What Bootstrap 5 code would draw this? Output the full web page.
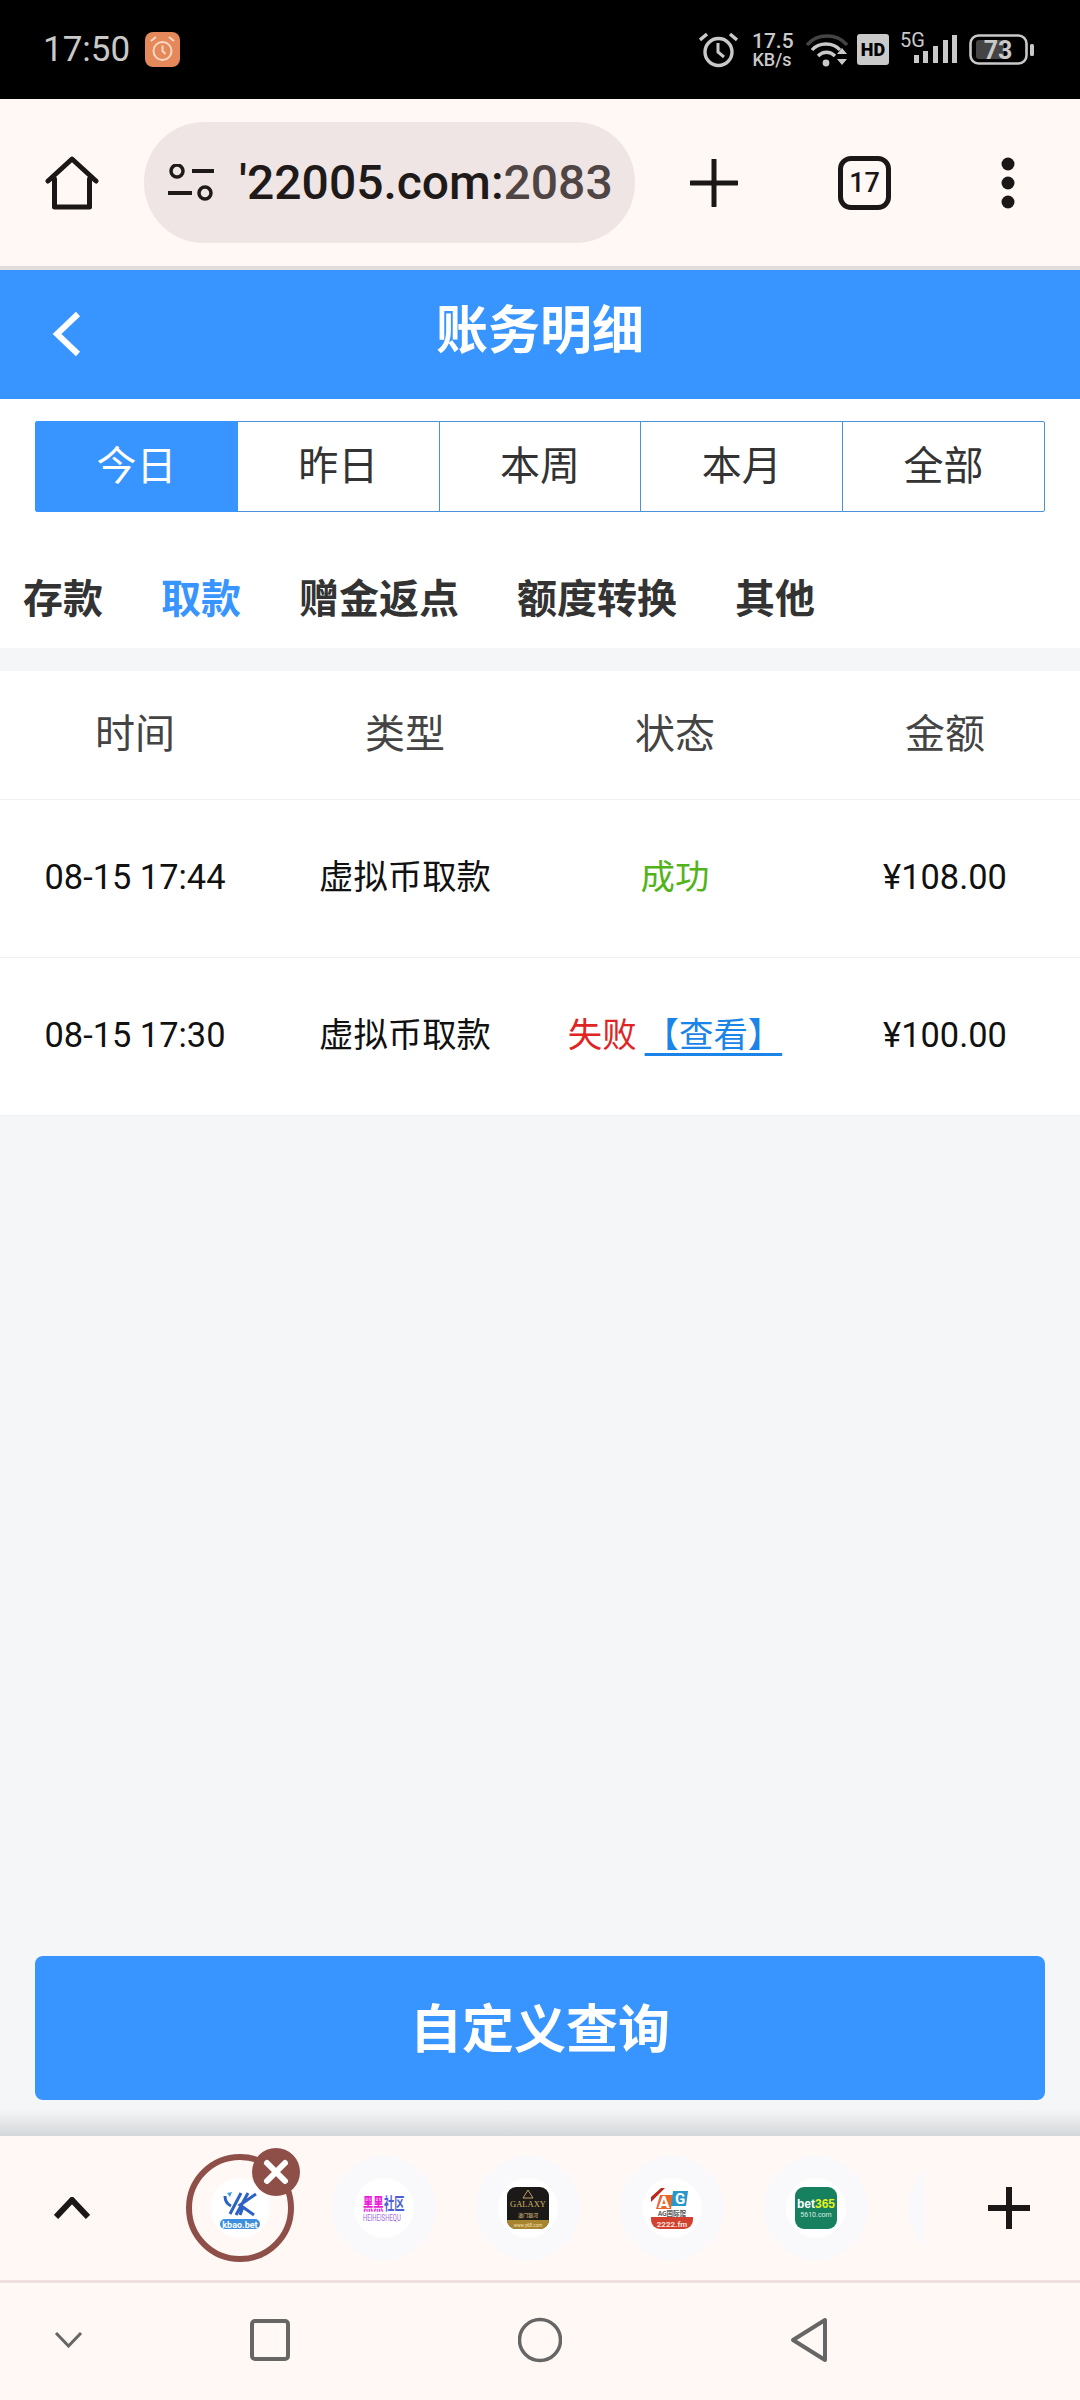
<!DOCTYPE html>
<html lang="zh-CN">
<head>
  <meta charset="UTF-8">
  <meta name="viewport" content="width=device-width, initial-scale=1.0">
  <title>账务明细</title>
  <link href="https://cdn.jsdelivr.net/npm/bootstrap@5.3.0/dist/css/bootstrap.min.css" rel="stylesheet">
  <style>
    html, body { height: 100%; }
    body { font-family: Roboto, "Noto Sans CJK SC", sans-serif; background: #f5f6f8; width: 1080px; }
    svg { display: block; flex: none; }

    /* phone status bar */
    .status-strip { height: 99px; background: #000; color: #c9c9c9; padding: 0 45px 0 43px; font-family: Roboto, sans-serif; }
    .status-time { font-size: 35px; line-height: 1; width: 102px; }
    .speed-text { font-size: 18px; line-height: 17px; font-weight: 500; width: 40px; margin: 0 14px; text-align: center; }
    .speed-text b { display: block; font-size: 21px; font-weight: 500; line-height: 20px; }
    .hd-icon { margin-left: 9px; }
    .net-icon, .batt-icon { margin-left: 11px; }

    /* browser toolbar */
    .browser-bar { height: 167px; background: #fff8f5; padding: 0 45px; }
    .url-pill { width: 491px; height: 121px; margin-left: 45px; margin-right: 55px; background: #efe5e4; border-radius: 60px; padding-left: 24px; }
    .url-text { margin-left: 25px; white-space: nowrap; font-family: Roboto, sans-serif; font-weight: 500; font-size: 48px; line-height: 60px; color: #1f1a1a; }
    .url-text i { font-style: normal; color: #4f4545; }
    .tab-count { width: 53px; height: 54px; margin: 0 109px 0 100px; border: 5px solid #1c1717; border-radius: 13px; font: 500 27px/44px Roboto, sans-serif; color: #1c1717; text-align: center; }
    .bar-rule { height: 4px; background: #e2dcdd; }

    /* page header */
    .page-head { height: 129px; background: #3894ff; padding-left: 52px; }
    .back-icon { margin-top: -2px; position: relative; z-index: 1; }
    .page-title { flex: 1; margin-left: -82px; text-align: center; color: #fff; font-size: 52px; font-weight: 700; line-height: 1; padding-bottom: 6px; }

    /* date range */
    .range-wrap { padding: 22px 35px 0; background: #fff; }
    .range-wrap .btn { height: 91px; padding: 0; font-size: 40px; line-height: 84px; color: #333; background: #fff; border: 1px solid #4a93d8; border-radius: 0; }
    .range-wrap .btn:first-child { border-radius: 2px 0 0 2px; }
    .range-wrap .btn:last-child { border-radius: 0 2px 2px 0; }
    .range-wrap .btn.active { color: #fff; background: #3894ff; border-color: #3894ff; }

    .kind-tabs { background: #fff; height: 136px; padding: 52px 0 0 23px; gap: 58px; font-size: 40px; font-weight: 700; line-height: 72px; color: #333; }
    .kind-tabs .on { color: #3894ff; }

    /* records */
    .record-list { margin-top: 23px; background: #fff; text-align: center; }
    .record-head { height: 129px; font-size: 40px; line-height: 128px; color: #444; border-bottom: 1px solid #f1f1f3; padding-bottom: 2px; }
    .record-row { height: 158px; font-size: 34.4px; line-height: 155px; color: #111; border-bottom: 1px solid #f1f1f3; }
    .state-ok { color: #52b31a; }
    .state-bad { color: #e02424; }
    .state-link { color: #1a84e8; text-decoration: underline; text-decoration-thickness: 3px; text-underline-offset: 6px; margin-left: 8px; }

    .custom-btn { height: 144px; margin: 0 35px 9px; padding-top: 12px; background: #3894ff; border: 0; border-radius: 8px; color: #fff; font-size: 52px; font-weight: 700; }
    .custom-btn:hover { background: #3894ff; color: #fff; }
    .bar-shade { height: 27px; background: linear-gradient(#f5f6f8, #d4d7d9); }

    /* bookmark strip */
    .site-strip { height: 144px; background: #fff8f5; padding-left: 54px; }
    .site-scroll { width: 757px; height: 144px; margin-left: 78px; margin-right: 62px; overflow: hidden; }
    .site-slot { flex: 0 0 144px; height: 144px; position: relative; }
    .site-halo { width: 104px; height: 104px; border-radius: 50%; background: #f9f8fb; }
    .site-halo.current { width: 108px; height: 108px; background: #fff8f5; border: 6px solid #8f4f49; }
    .site-icon { width: 60px; height: 60px; border-radius: 50%; background: #fff; }
    .site-close { position: absolute; left: 84px; top: 12px; width: 48px; height: 48px; border-radius: 50%; background: #8f4f49; }
    .strip-rule { height: 3px; background: #f0dfdf; }

    /* phone nav */
    .phone-nav { height: 117px; background: #fff8f5; padding: 0 0 3px 54px; }
    .nav-square { margin-left: 167px; }
    .nav-round, .nav-back { margin-left: 228px; }
  </style>
</head>
<body class="d-flex flex-column">

  <div class="status-strip d-flex align-items-center">
    <span class="status-time">17:50</span>
    <svg width="35" height="35" viewBox="0 0 35 35">
      <rect width="35" height="35" rx="8" fill="#e5895a"/>
      <circle cx="17.5" cy="19" r="9" fill="none" stroke="#f8d9c6" stroke-width="2"/>
      <path d="M17.5 13.5V19l3 3M6 9l5-4M29 9l-5-4" fill="none" stroke="#f8d9c6" stroke-width="2"/>
    </svg>
    <span class="flex-grow-1"></span>
    <svg width="39" height="36" viewBox="0 0 39 36">
      <circle cx="19.5" cy="20" r="13.5" fill="none" stroke="#c9c9c9" stroke-width="3.4"/>
      <path d="M19 11v9l6 5" fill="none" stroke="#c9c9c9" stroke-width="3"/>
      <path d="M1 8l7-6M38 8l-7-6" fill="none" stroke="#c9c9c9" stroke-width="3.4"/>
    </svg>
    <span class="speed-text"><b>17.5</b>KB/s</span>
    <svg width="42" height="34" viewBox="0 0 42 34">
      <path d="M1 12C11 0 31 0 41 12" fill="none" stroke="#444" stroke-width="3.4"/>
      <path d="M6 17C13 9 27 9 34 17M12 23c5-5 12-5 17 0" fill="none" stroke="#c9c9c9" stroke-width="3.4"/>
      <circle cx="20" cy="30" r="3.4" fill="#c9c9c9"/>
      <path d="M31 21l5-6 5 6zM31 26h10l-5 6z" fill="#c9c9c9"/>
    </svg>
    <svg class="hd-icon" width="32" height="31" viewBox="0 0 32 31">
      <rect width="32" height="31" rx="3" fill="#c9c9c9"/>
      <text x="16" y="22" text-anchor="middle" font-family="Roboto, sans-serif" font-size="18" font-weight="900" fill="#000">HD</text>
    </svg>
    <svg class="net-icon" width="58" height="56" viewBox="0 0 58 56">
      <text x="0" y="25" font-family="Roboto, sans-serif" font-size="20" fill="#c9c9c9">5G</text>
      <path d="M14 33h5v8h-5zM23 29h5v12h-5zM33 24h5v17h-5zM43 18h5v23h-5zM52 13h5v28h-5z" fill="#c9c9c9"/>
    </svg>
    <svg class="batt-icon" width="66" height="31" viewBox="0 0 66 31">
      <rect x="1.5" y="1.5" width="56" height="28" rx="8" fill="none" stroke="#c9c9c9" stroke-width="2.6"/>
      <rect x="7" y="6" width="28" height="19" rx="3" fill="#444"/>
      <rect x="61" y="10" width="4" height="12" rx="1.5" fill="#c9c9c9"/>
      <text x="29" y="25" text-anchor="middle" font-family="Roboto, sans-serif" font-size="25" font-weight="700" fill="#c9c9c9">73</text>
    </svg>
  </div>

  <div class="browser-bar d-flex align-items-center">
    <svg width="54" height="54" viewBox="0 0 54 54">
      <path d="M3 25L27 3l24 22M9.500 23v28h35V23" fill="none" stroke="#1c1717" stroke-width="5" stroke-linejoin="round" stroke-linecap="round"/>
    </svg>
    <div class="url-pill d-flex align-items-center">
      <svg width="46" height="37" viewBox="0 0 46 37">
        <circle cx="9" cy="7" r="6" fill="none" stroke="#1f1a1a" stroke-width="3.5"/>
        <circle cx="37" cy="29" r="6" fill="none" stroke="#1f1a1a" stroke-width="3.5"/>
        <path d="M24 7h22M0 29h24" stroke="#1f1a1a" stroke-width="4"/>
      </svg>
      <div class="url-text">'22005.com:<i>2083</i></div>
    </div>
    <svg width="48" height="48" viewBox="0 0 48 48">
      <path d="M24 1v46M1 24h46" stroke="#1c1717" stroke-width="5" stroke-linecap="round"/>
    </svg>
    <div class="tab-count">17</div>
    <svg width="16" height="54" viewBox="0 0 16 54">
      <circle cx="8" cy="8" r="6.500" fill="#1c1717"/><circle cx="8" cy="27" r="6.500" fill="#1c1717"/><circle cx="8" cy="46" r="6.500" fill="#1c1717"/>
    </svg>
  </div>
  <div class="bar-rule"></div>

  <div class="page-head d-flex align-items-center">
    <svg class="back-icon" width="30" height="46" viewBox="0 0 30 46">
      <path d="M26 3L5 23l21 20" fill="none" stroke="#fff" stroke-width="6"/>
    </svg>
    <div class="page-title">账务明细</div>
  </div>

  <div class="range-wrap">
    <div class="btn-group w-100" role="group">
      <button type="button" class="btn active">今日</button>
      <button type="button" class="btn">昨日</button>
      <button type="button" class="btn">本周</button>
      <button type="button" class="btn">本月</button>
      <button type="button" class="btn">全部</button>
    </div>
  </div>

  <div class="kind-tabs d-flex">
    <span>存款</span>
    <span class="on">取款</span>
    <span>赠金返点</span>
    <span>额度转换</span>
    <span>其他</span>
  </div>

  <div class="record-list">
    <div class="row g-0 record-head">
      <div class="col-3">时间</div>
      <div class="col-3">类型</div>
      <div class="col-3">状态</div>
      <div class="col-3">金额</div>
    </div>
    <div class="row g-0 record-row">
      <div class="col-3">08-15 17:44</div>
      <div class="col-3">虚拟币取款</div>
      <div class="col-3 state-ok">成功</div>
      <div class="col-3">¥108.00</div>
    </div>
    <div class="row g-0 record-row">
      <div class="col-3">08-15 17:30</div>
      <div class="col-3">虚拟币取款</div>
      <div class="col-3"><span class="state-bad">失败</span><a class="state-link" href="#">【查看】</a></div>
      <div class="col-3">¥100.00</div>
    </div>
  </div>

  <div class="flex-grow-1"></div>

  <button type="button" class="btn custom-btn">自定义查询</button>
  <div class="bar-shade"></div>

  <div class="site-strip d-flex align-items-center">
    <svg width="36" height="22" viewBox="0 0 36 22">
      <path d="M2 20L18 3l16 17" fill="none" stroke="#1c1717" stroke-width="6"/>
    </svg>
    <div class="site-scroll d-flex">
      <div class="site-slot d-flex align-items-center justify-content-center">
        <div class="site-halo current d-flex align-items-center justify-content-center">
          <div class="site-icon">
            <svg width="60" height="60" viewBox="0 0 60 60">
              <path d="M15 18c0 5 2 8 6 10M20 36L31 15M26 37L38 15M46 16L30 27l14 10M33 29l-3 8" fill="none" stroke="#2d62c4" stroke-width="3"/>
              <path d="M17 15l5-1-2 5z" fill="#37a0e6"/>
              <rect x="10" y="41" width="40" height="10" rx="5" fill="#3d8fe0"/>
              <text x="30" y="49.500" text-anchor="middle" font-family="Roboto, sans-serif" font-size="9" font-weight="700" fill="#fff">kbao.bet</text>
            </svg>
          </div>
        </div>
        <div class="site-close">
          <svg width="48" height="48" viewBox="0 0 48 48">
            <path d="M15 15l18 18M33 15L15 33" stroke="#fff" stroke-width="6" stroke-linecap="round"/>
          </svg>
        </div>
      </div>
      <div class="site-slot d-flex align-items-center justify-content-center">
        <div class="site-halo d-flex align-items-center justify-content-center">
          <div class="site-icon">
            <svg width="60" height="60" viewBox="0 0 60 60">
              <g transform="scale(1 1.7)">
                <text x="9" y="19" font-family="Noto Sans CJK SC, sans-serif" font-size="10.300" font-weight="700" fill="#e81bd6">黑黑</text>
                <text x="30" y="19" font-family="Noto Sans CJK SC, sans-serif" font-size="10.300" font-weight="700" fill="#4d5fd6">社区</text>
              </g>
              <g transform="scale(1 1.4)">
                <text x="9" y="31" font-family="Roboto, sans-serif" font-size="6" fill="#a56be0">HEIHEISHEQU</text>
              </g>
            </svg>
          </div>
        </div>
      </div>
      <div class="site-slot d-flex align-items-center justify-content-center">
        <div class="site-halo d-flex align-items-center justify-content-center">
          <div class="site-icon">
            <svg width="60" height="60" viewBox="0 0 60 60">
              <rect x="9" y="9" width="42" height="42" rx="9" fill="#1c1a18"/>
              <path d="M9 42h42a9 9 0 0 1-9 9H18a9 9 0 0 1-9-9z" fill="#a8842f"/>
              <path d="M30 12l5 8H25z" fill="none" stroke="#bfa160" stroke-width="1"/>
              <text x="30" y="29" text-anchor="middle" font-family="Liberation Serif, serif" font-size="8.500" fill="#d2b36a">GALAXY</text>
              <text x="30" y="39" text-anchor="middle" font-family="Noto Sans CJK SC, sans-serif" font-size="5" fill="#e0c88a">澳门银河</text>
              <text x="30" y="48.500" text-anchor="middle" font-family="Roboto, sans-serif" font-size="4.500" fill="#f3e3b6">www.y68.com</text>
            </svg>
          </div>
        </div>
      </div>
      <div class="site-slot d-flex align-items-center justify-content-center">
        <div class="site-halo d-flex align-items-center justify-content-center">
          <div class="site-icon">
            <svg width="60" height="60" viewBox="0 0 60 60">
              <path d="M9 37h42v5a9 9 0 0 1-9 9H18a9 9 0 0 1-9-9z" fill="#d2402f"/>
              <path d="M9 19l10-9h4L9 24z" fill="#b8281f"/>
              <path d="M18 17h13l-2 14H14z" fill="#e8672a"/>
              <path d="M31 13h15l-2 15H29z" fill="#2a97c7"/>
              <text x="22" y="30" text-anchor="middle" font-family="Roboto, sans-serif" font-size="17" font-weight="700" fill="#fff">A</text>
              <text x="38" y="26" text-anchor="middle" font-family="Roboto, sans-serif" font-size="15" font-weight="700" fill="#fff">G</text>
              <rect x="9" y="31" width="42" height="8" fill="#fff"/>
              <text x="30" y="38" text-anchor="middle" font-family="Noto Sans CJK SC, sans-serif" font-size="6.500" font-weight="700" fill="#555">AG国际馆</text>
              <text x="30" y="48.500" text-anchor="middle" font-family="Roboto, sans-serif" font-size="8" font-weight="700" fill="#fbe4dc">2222.fm</text>
            </svg>
          </div>
        </div>
      </div>
      <div class="site-slot d-flex align-items-center justify-content-center">
        <div class="site-halo d-flex align-items-center justify-content-center">
          <div class="site-icon">
            <svg width="60" height="60" viewBox="0 0 60 60">
              <rect x="9" y="9" width="42" height="42" rx="9" fill="#17805f"/>
              <text x="30" y="30" text-anchor="middle" font-family="Liberation Sans, sans-serif" font-size="12" font-weight="700" fill="#fff">bet<tspan fill="#e8f21c">365</tspan></text>
              <text x="30" y="38.500" text-anchor="middle" font-family="Roboto, sans-serif" font-size="7" fill="#d6efe4">5610.com</text>
            </svg>
          </div>
        </div>
      </div>
      <div class="site-slot d-flex align-items-center justify-content-center">
        <div class="site-halo"></div>
      </div>
    </div>
    <svg width="44" height="44" viewBox="0 0 44 44">
      <path d="M22 1v42M1 22h42" stroke="#1c1717" stroke-width="6"/>
    </svg>
  </div>
  <div class="strip-rule"></div>

  <div class="phone-nav d-flex align-items-center">
    <svg width="29" height="16" viewBox="0 0 29 16">
      <path d="M2 1l12.500 13L27 1" fill="none" stroke="#666" stroke-width="3"/>
    </svg>
    <svg class="nav-square" width="40" height="42" viewBox="0 0 40 42">
      <rect x="2" y="2" width="36" height="38" rx="3" fill="none" stroke="#666" stroke-width="4"/>
    </svg>
    <svg class="nav-round" width="44" height="46" viewBox="0 0 44 46">
      <circle cx="22" cy="23" r="20.500" fill="none" stroke="#666" stroke-width="3.500"/>
    </svg>
    <svg class="nav-back" width="38" height="46" viewBox="0 0 38 46">
      <path d="M35 3v40L3 23z" fill="none" stroke="#666" stroke-width="4" stroke-linejoin="round"/>
    </svg>
  </div>

</body>
</html>
